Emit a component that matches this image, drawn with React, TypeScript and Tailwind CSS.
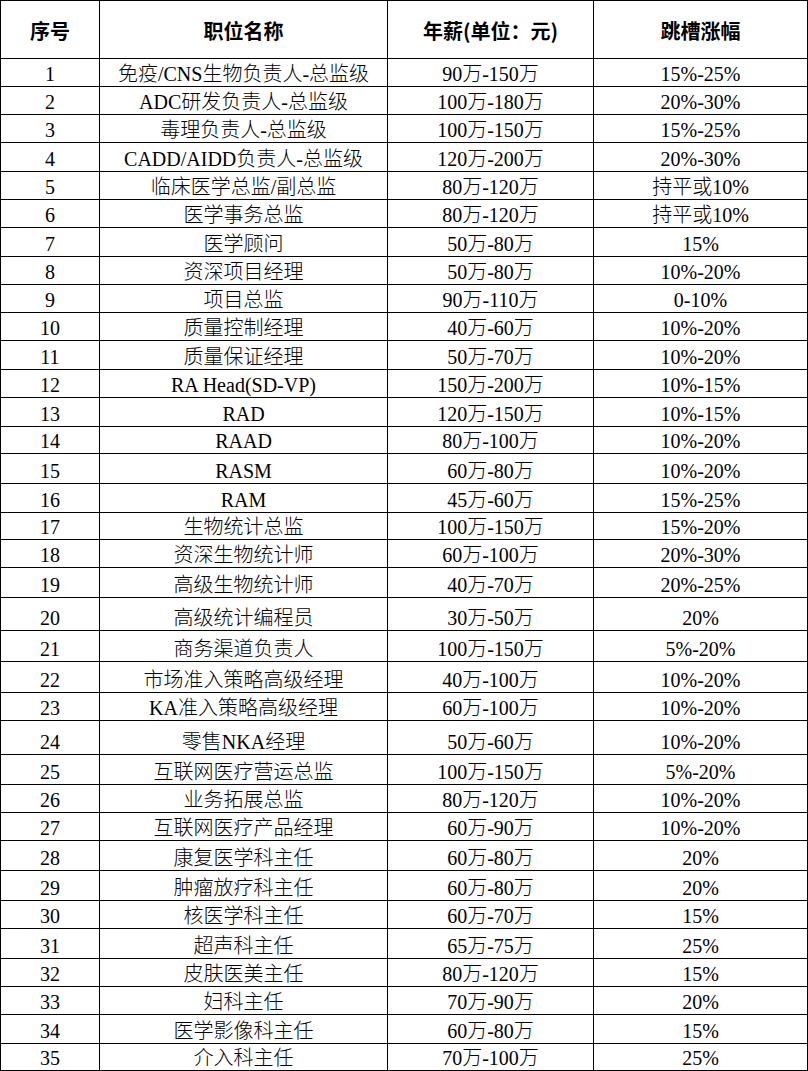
const rows: [string, string, string, string][] = [
  ["h-[28px]", "免疫/CNS生物负责人-总监级", "90万-150万", "15%-25%"],
  ["h-[28px]", "ADC研发负责人-总监级", "100万-180万", "20%-30%"],
  ["h-[28px]", "毒理负责人-总监级", "100万-150万", "15%-25%"],
  ["h-[29px]", "CADD/AIDD负责人-总监级", "120万-200万", "20%-30%"],
  ["h-[28px]", "临床医学总监/副总监", "80万-120万", "持平或10%"],
  ["h-[28px]", "医学事务总监", "80万-120万", "持平或10%"],
  ["h-[29px]", "医学顾问", "50万-80万", "15%"],
  ["h-[28px]", "资深项目经理", "50万-80万", "10%-20%"],
  ["h-[28px]", "项目总监", "90万-110万", "0-10%"],
  ["h-[28px]", "质量控制经理", "40万-60万", "10%-20%"],
  ["h-[29px]", "质量保证经理", "50万-70万", "10%-20%"],
  ["h-[28px]", "RA Head(SD-VP)", "150万-200万", "10%-15%"],
  ["h-[29px]", "RAD", "120万-150万", "10%-15%"],
  ["h-[27px]", "RAAD", "80万-100万", "10%-20%"],
  ["h-[30px]", "RASM", "60万-80万", "10%-20%"],
  ["h-[29px]", "RAM", "45万-60万", "15%-25%"],
  ["h-[27px]", "生物统计总监", "100万-150万", "15%-20%"],
  ["h-[28px]", "资深生物统计师", "60万-100万", "20%-30%"],
  ["h-[30px]", "高级生物统计师", "40万-70万", "20%-25%"],
  ["h-[33px]", "高级统计编程员", "30万-50万", "20%"],
  ["h-[31px]", "商务渠道负责人", "100万-150万", "5%-20%"],
  ["h-[31px]", "市场准入策略高级经理", "40万-100万", "10%-20%"],
  ["h-[28px]", "KA准入策略高级经理", "60万-100万", "10%-20%"],
  ["h-[34px]", "零售NKA经理", "50万-60万", "10%-20%"],
  ["h-[30px]", "互联网医疗营运总监", "100万-150万", "5%-20%"],
  ["h-[28px]", "业务拓展总监", "80万-120万", "10%-20%"],
  ["h-[28px]", "互联网医疗产品经理", "60万-90万", "10%-20%"],
  ["h-[30px]", "康复医学科主任", "60万-80万", "20%"],
  ["h-[30px]", "肿瘤放疗科主任", "60万-80万", "20%"],
  ["h-[28px]", "核医学科主任", "60万-70万", "15%"],
  ["h-[30px]", "超声科主任", "65万-75万", "25%"],
  ["h-[28px]", "皮肤医美主任", "80万-120万", "15%"],
  ["h-[28px]", "妇科主任", "70万-90万", "20%"],
  ["h-[29px]", "医学影像科主任", "60万-80万", "15%"],
  ["h-[27px]", "介入科主任", "70万-100万", "25%"],
];

const cols = "grid grid-cols-[99px_288px_206px_214px]";
const cell =
  "flex items-end justify-center border-r border-b border-black pb-[1px] leading-[22px] whitespace-nowrap";

export default function App() {
  return (
    <div className="w-[808px] bg-white text-black">
      <div className="border-t border-l border-black">
        <div
          className={`${cols} h-[58px] text-[20px] font-bold font-['Noto_Sans_CJK_SC',sans-serif]`}
        >
          {["序号", "职位名称", "年薪(单位：元)", "跳槽涨幅"].map((h) => (
            <div
              key={h}
              className="flex items-center justify-center border-r border-b border-black pt-[2px]"
            >
              {h}
            </div>
          ))}
        </div>

        {rows.map(([h, title, pay, jump], i) => (
          <div
            key={i}
            className={`${cols} ${h} text-[20px] font-light font-['Liberation_Serif','Noto_Sans_CJK_SC',serif]`}
          >
            <div className={cell}>{i + 1}</div>
            <div className={cell}>{title}</div>
            <div className={cell}>{pay}</div>
            <div className={cell}>{jump}</div>
          </div>
        ))}
      </div>
    </div>
  );
}
